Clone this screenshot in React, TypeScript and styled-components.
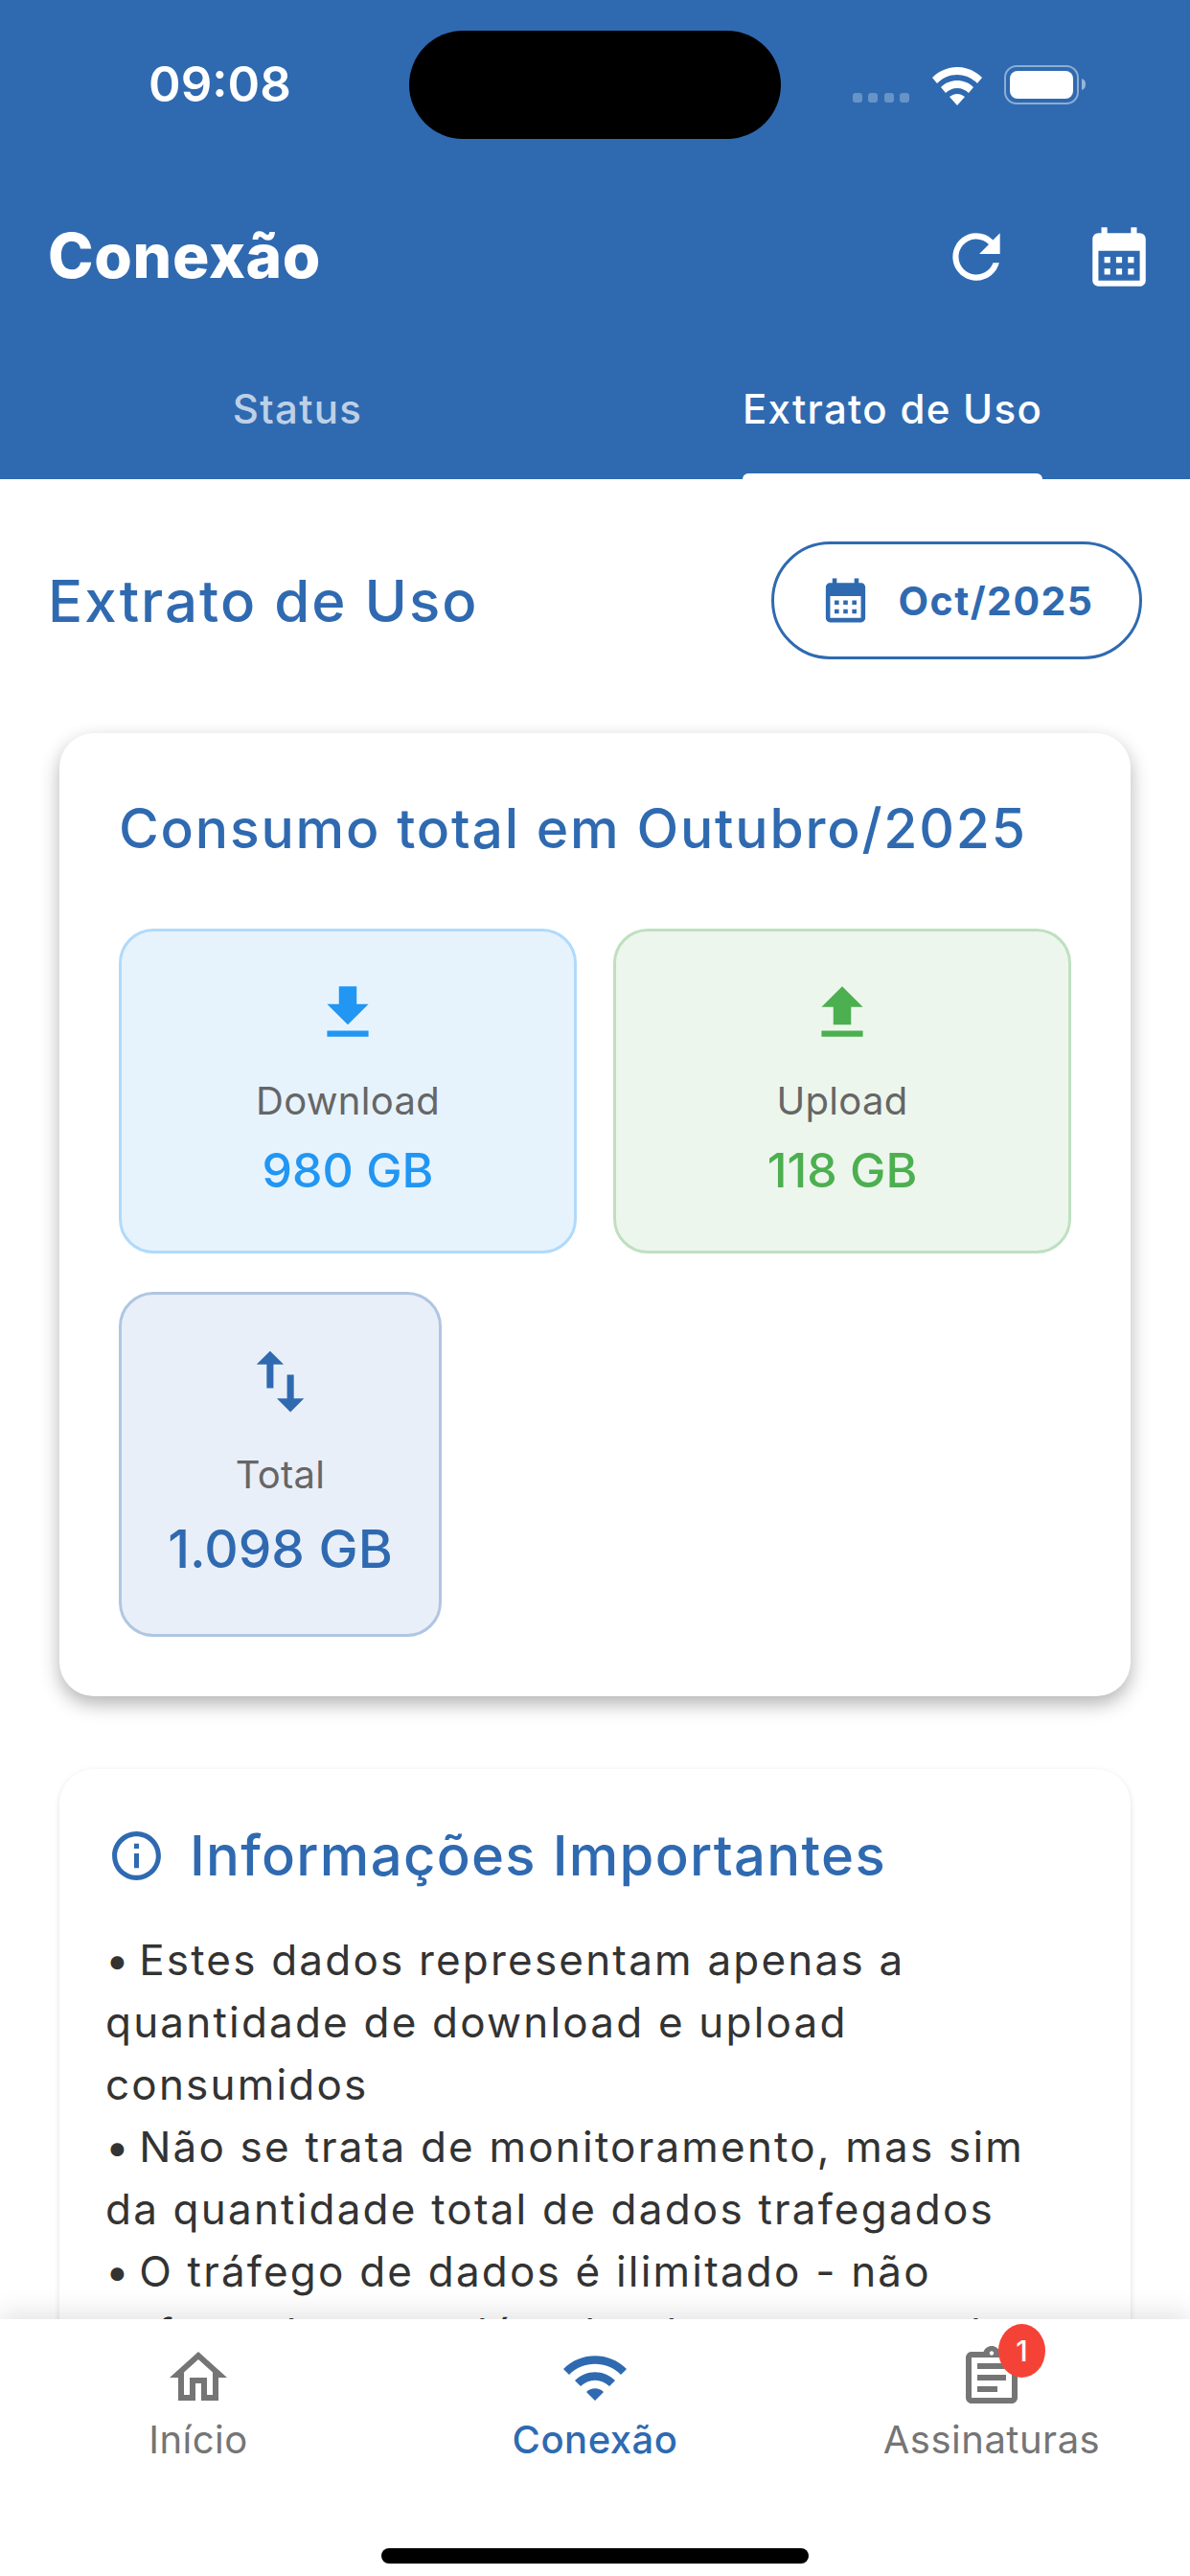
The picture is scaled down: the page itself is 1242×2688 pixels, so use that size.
import React from 'react';
import styled, { createGlobalStyle } from 'styled-components';
import {
  MdCalendarMonth,
  MdFileDownload,
  MdFileUpload,
  MdInfoOutline,
  MdOutlineAssignment,
  MdOutlineHome,
  MdRefresh,
  MdSwapVert,
  MdWifi,
} from 'react-icons/md';

const PRIMARY = '#2f6ab1';
const FONT = '"Inter", "Open Sans", sans-serif';

const GlobalStyle = createGlobalStyle`
  html, body { margin: 0; padding: 0; background: #fff; }
  * { box-sizing: border-box; }
  body { font-family: ${FONT}; }
`;

const Screen = styled.div`
  width: 1242px;
  height: 2688px;
  display: flex;
  flex-direction: column;
  overflow: hidden;
  background: #fff;
`;

const Header = styled.header`
  height: 500px;
  flex: none;
  background: ${PRIMARY};
  color: #fff;
  display: flex;
  flex-direction: column;
`;

const StatusBar = styled.div`
  height: 177px;
  padding: 32px 50px 0 155px;
  display: flex;
  align-items: flex-start;
`;

const Clock = styled.div`
  width: 150px;
  margin-top: 26px;
  font-size: 51px;
  line-height: 60px;
  font-weight: 600;
  white-space: nowrap;
`;

const Island = styled.div`
  width: 388px;
  height: 113px;
  margin-left: 122px;
  border-radius: 57px;
  background: #000;
`;

const StatusIcons = styled.div`
  margin-left: 75px;
  margin-top: 36px;
  display: flex;
  align-items: flex-end;
  gap: 23px;
`;

const TitleRow = styled.div`
  height: 178px;
  padding: 0 50px;
  display: flex;
  align-items: flex-start;
  justify-content: space-between;
`;

const Title = styled.h1`
  margin: 57px 0 0;
  font-size: 64px;
  line-height: 66px;
  font-weight: 800;
  letter-spacing: 0.7px;
`;

const TitleActions = styled.div`
  display: flex;
  align-items: center;
  gap: 75px;
  margin: 54px -13px 0 0;
`;

const Tabs = styled.div`
  flex: 1;
  display: grid;
  grid-template-columns: 1fr 1fr;
`;

const Tab = styled.div<{ $active?: boolean }>`
  display: flex;
  justify-content: center;
  height: 100%;
  color: ${({ $active }) => ($active ? '#fff' : 'rgba(255, 255, 255, 0.7)')};
  font-size: 42px;
  font-weight: 500;
`;

const TabLabel = styled.div<{ $active?: boolean }>`
  position: relative;
  height: 145px;
  padding-top: 46px;
  line-height: 52px;
  letter-spacing: 1.3px;

  &::after {
    content: '';
    display: ${({ $active }) => ($active ? 'block' : 'none')};
    position: absolute;
    left: 0;
    right: 0;
    bottom: 0;
    height: 6px;
    border-radius: 6px 6px 0 0;
    background: #fff;
  }
`;

const Content = styled.main`
  flex: 1;
  min-height: 0;
  overflow: hidden;
  padding: 65px 50px 0;
`;

const SectionHead = styled.div`
  display: flex;
  align-items: center;
  justify-content: space-between;
  height: 123px;
`;

const SectionTitle = styled.h2`
  margin: 0;
  color: ${PRIMARY};
  font-size: 60px;
  font-weight: 500;
  letter-spacing: 2px;
`;

const MonthPill = styled.div`
  width: 387px;
  height: 123px;
  border: 3px solid ${PRIMARY};
  border-radius: 62px;
  color: ${PRIMARY};
  display: flex;
  align-items: center;
  justify-content: center;
  gap: 27px;
  font-size: 41px;
  font-weight: 700;
  letter-spacing: 1.5px;
`;

const Card = styled.section<{ $raised?: boolean }>`
  margin: ${({ $raised }) => ($raised ? '77px 12px 0' : '76px 12px 0')};
  border-radius: 36px;
  background: #fff;
  box-shadow: ${({ $raised }) =>
    $raised
      ? '0 8px 20px rgba(0, 0, 0, 0.3)'
      : '0 2px 6px rgba(0, 0, 0, 0.12)'};
`;

const ConsumptionCard = styled(Card)`
  height: 1005px;
  padding: 62px;
`;

const CardTitle = styled.h3`
  margin: 0 0 66px;
  color: ${PRIMARY};
  font-size: 57px;
  line-height: 76px;
  font-weight: 500;
  letter-spacing: 1.8px;
`;

const Tiles = styled.div`
  display: flex;
  flex-wrap: wrap;
  gap: 40px 38px;
`;

const Tile = styled.div<{ $bg: string; $line: string; $wide?: boolean }>`
  width: ${({ $wide }) => ($wide ? '478px' : '337px')};
  height: ${({ $wide }) => ($wide ? '339px' : '360px')};
  background: ${({ $bg }) => $bg};
  border: 3px solid ${({ $line }) => $line};
  border-radius: 36px;
  display: flex;
  flex-direction: column;
  align-items: center;
  padding-top: 48px;
`;

const TileLabel = styled.div`
  margin-top: 30px;
  color: #666;
  font-size: 40px;
  line-height: 50px;
  letter-spacing: 0.3px;
`;

const TileValue = styled.div<{ $color: string; $large?: boolean }>`
  margin-top: ${({ $large }) => ($large ? '18px' : '13px')};
  color: ${({ $color }) => $color};
  font-size: ${({ $large }) => ($large ? '55px' : '50px')};
  line-height: 68px;
  font-weight: 500;
`;

const InfoCard = styled(Card)`
  padding: 50px 48px;
`;

const InfoHead = styled.div`
  display: flex;
  align-items: center;
  gap: 25px;
  margin-bottom: 37px;
  padding-left: 2px;
  color: ${PRIMARY};
`;

const InfoTitle = styled.h3`
  margin: 0;
  font-size: 58px;
  line-height: 80px;
  font-weight: 500;
  letter-spacing: 1.3px;
`;

const InfoLine = styled.div`
  color: #333;
  font-size: 44px;
  line-height: 65px;
  letter-spacing: 2.2px;
  white-space: nowrap;
`;

const Bullet = styled.span`
  letter-spacing: -1px;
`;

const BottomNav = styled.nav`
  position: relative;
  height: 268px;
  flex: none;
  background: #fff;
  box-shadow: 0 -8px 24px rgba(0, 0, 0, 0.1);
  display: grid;
  grid-template-columns: repeat(3, 1fr);
  align-items: start;
`;

const NavItem = styled.div<{ $active?: boolean }>`
  display: flex;
  flex-direction: column;
  align-items: center;
  padding-top: 25px;
  color: ${({ $active }) => ($active ? PRIMARY : '#757575')};
`;

const NavIconWrap = styled.div`
  position: relative;
  height: 72px;
  display: flex;
  align-items: center;
`;

const NavLabel = styled.div<{ $active?: boolean }>`
  margin-top: 4px;
  font-size: 40px;
  line-height: 50px;
  letter-spacing: 0.5px;
  font-weight: ${({ $active }) => ($active ? 500 : 400)};
`;

const Badge = styled.div`
  position: absolute;
  top: -20px;
  right: -20px;
  width: 49px;
  height: 56px;
  border-radius: 50%;
  background: #f44336;
  color: #fff;
  font-size: 30px;
  font-weight: 500;
  line-height: 56px;
  text-align: center;
`;

const HomeIndicator = styled.div`
  position: absolute;
  left: 398px;
  bottom: 13px;
  width: 446px;
  height: 16px;
  border-radius: 8px;
  background: #000;
`;

const SignalDots = () => (
  <svg width="60" height="14" viewBox="0 0 60 14" aria-hidden="true" style={{ marginBottom: 1 }}>
    {[0, 16, 33, 49].map((x) => (
      <rect key={x} x={x} y="2" width="10" height="10" rx="3" fill="#fff" opacity="0.28" />
    ))}
  </svg>
);

const WifiGlyph = () => (
  <svg width="52" height="40" viewBox="0 0 52 40" aria-hidden="true">
    <path fill="#fff" d="M26 0c10 0 19 4 26 11l-5 6C41 11 34 8 26 8S11 11 5 17L0 11C7 4 16 0 26 0z" />
    <path fill="#fff" d="M26 14c6 0 12 2 17 7l-5 6c-3-3-7-5-12-5s-9 2-12 5l-5-6c5-5 11-7 17-7z" />
    <path fill="#fff" d="M26 28c3 0 5 1 8 3l-8 9-8-9c3-2 5-3 8-3z" />
  </svg>
);

const BatteryGlyph = () => (
  <svg width="86" height="42" viewBox="0 0 86 42" aria-hidden="true">
    <rect x="1" y="1" width="76" height="39" rx="12" fill="none" stroke="#fff" strokeOpacity="0.45" strokeWidth="2" />
    <rect x="6" y="6" width="66" height="29" rx="8" fill="#fff" />
    <path d="M81 14c3 1 4 3 4 6s-1 5-4 6z" fill="#fff" fillOpacity="0.5" />
  </svg>
);

export default function App() {
  return (
    <Screen>
      <GlobalStyle />
      <Header>
        <StatusBar>
          <Clock>09:08</Clock>
          <Island />
          <StatusIcons>
            <SignalDots />
            <WifiGlyph />
            <BatteryGlyph />
          </StatusIcons>
        </StatusBar>
        <TitleRow>
          <Title>Conexão</Title>
          <TitleActions>
            <MdRefresh size={74} />
            <MdCalendarMonth size={74} />
          </TitleActions>
        </TitleRow>
        <Tabs>
          <Tab>
            <TabLabel>Status</TabLabel>
          </Tab>
          <Tab $active>
            <TabLabel $active>Extrato de Uso</TabLabel>
          </Tab>
        </Tabs>
      </Header>

      <Content>
        <SectionHead>
          <SectionTitle>Extrato de Uso</SectionTitle>
          <MonthPill>
            <MdCalendarMonth size={55} />
            Oct/2025
          </MonthPill>
        </SectionHead>

        <ConsumptionCard $raised>
          <CardTitle>Consumo total em Outubro/2025</CardTitle>
          <Tiles>
            <Tile $wide $bg="#e6f3fd" $line="#b0dafb">
              <MdFileDownload size={74} color="#2196f3" />
              <TileLabel>Download</TileLabel>
              <TileValue $color="#2196f3">980 GB</TileValue>
            </Tile>
            <Tile $wide $bg="#edf6ed" $line="#bfe0c0">
              <MdFileUpload size={74} color="#4caf50" />
              <TileLabel>Upload</TileLabel>
              <TileValue $color="#4caf50">118 GB</TileValue>
            </Tile>
            <Tile $bg="#e9eff8" $line="#afc6e2">
              <MdSwapVert size={85} color={PRIMARY} />
              <TileLabel>Total</TileLabel>
              <TileValue $color={PRIMARY} $large>1.098 GB</TileValue>
            </Tile>
          </Tiles>
        </ConsumptionCard>

        <InfoCard>
          <InfoHead>
            <MdInfoOutline size={61} />
            <InfoTitle>Informações Importantes</InfoTitle>
          </InfoHead>
          <InfoLine><Bullet>• </Bullet>Estes dados representam apenas a</InfoLine>
          <InfoLine>quantidade de download e upload</InfoLine>
          <InfoLine>consumidos</InfoLine>
          <InfoLine><Bullet>• </Bullet>Não se trata de monitoramento, mas sim</InfoLine>
          <InfoLine>da quantidade total de dados trafegados</InfoLine>
          <InfoLine><Bullet>• </Bullet>O tráfego de dados é ilimitado - não</InfoLine>
          <InfoLine>sofre cobrança além do plano contratado</InfoLine>
        </InfoCard>
      </Content>

      <BottomNav>
        <NavItem>
          <NavIconWrap>
            <MdOutlineHome size={72} />
          </NavIconWrap>
          <NavLabel>Início</NavLabel>
        </NavItem>
        <NavItem $active>
          <NavIconWrap>
            <MdWifi size={72} />
          </NavIconWrap>
          <NavLabel $active>Conexão</NavLabel>
        </NavItem>
        <NavItem>
          <NavIconWrap>
            <MdOutlineAssignment size={72} />
            <Badge>1</Badge>
          </NavIconWrap>
          <NavLabel>Assinaturas</NavLabel>
        </NavItem>
        <HomeIndicator />
      </BottomNav>
    </Screen>
  );
}
